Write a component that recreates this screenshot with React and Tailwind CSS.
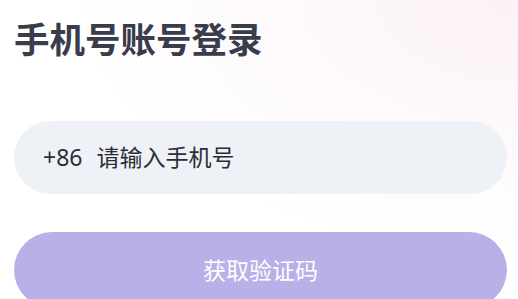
export default function App() {
  return (
    <div className="w-[518px] h-[299px] overflow-hidden bg-[radial-gradient(ellipse_at_top_right,#fcf2f6_0%,#ffffff_60%)] font-['Noto_Sans','Noto_Sans_CJK_SC',sans-serif]">
      <div className="pl-[14px] pr-[11px] pt-[14px]">
        <h1 className="text-[35.5px] leading-[50px] font-bold text-[#383c4b]">手机号账号登录</h1>

        <div className="mt-[57px] h-[73px] rounded-full bg-[#eef1f6] flex items-center pl-[29px] text-[23px] text-[#2b2d36]">
          <span>+86</span>
          <span className="ml-[14px]">请输入手机号</span>
        </div>

        <button className="mt-[38px] w-full h-[76px] rounded-full bg-[#b8b0e6] text-white text-[23px] flex items-center justify-center">
          获取验证码
        </button>
      </div>
    </div>
  );
}
